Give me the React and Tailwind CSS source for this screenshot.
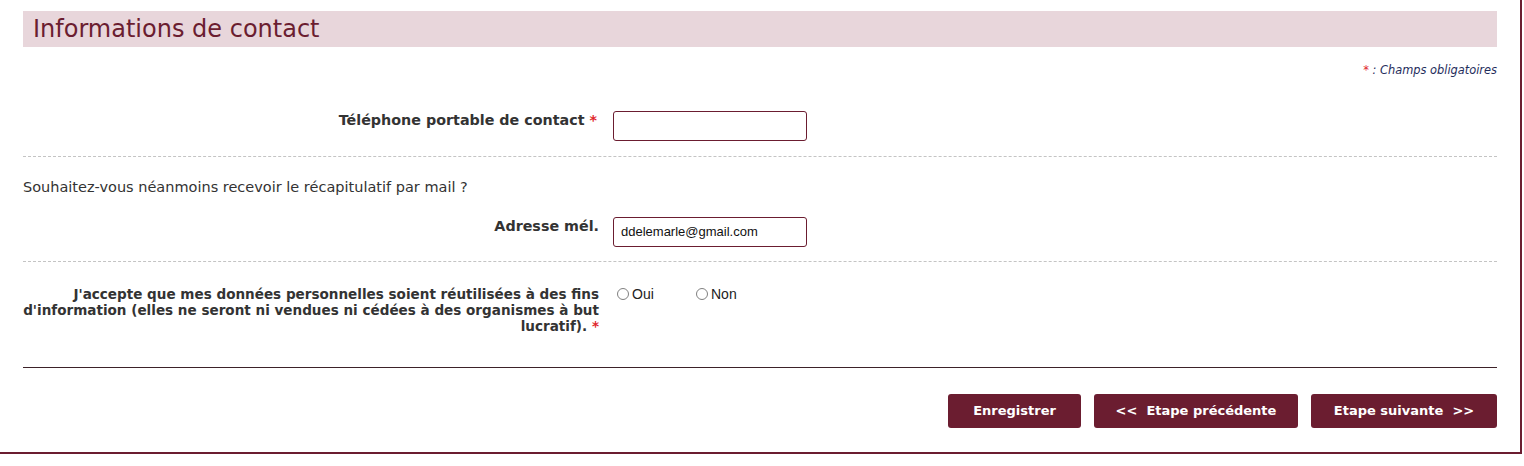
export default function App() {
  const font = { fontFamily: '"DejaVu Sans", Verdana, sans-serif' };
  const arial = { fontFamily: '"Liberation Sans", Arial, sans-serif' };
  return (
    <div className="w-[1522px] h-[454px] border-r-2 border-b-2 border-[#6b1d30] bg-white box-border px-[23px] pt-[11px]" style={font}>
      <div className="h-[36px] bg-[#e8d6db] pl-[10px] flex items-center text-[24px] text-[#6b1d30] leading-none">
        Informations de contact
      </div>
      <div className="mt-[16px] text-right text-[11.4px] italic text-[#1f2d5c] leading-[14px]">
        <span className="text-[#e0262b] not-italic">*</span> : Champs obligatoires
      </div>

      <div className="flex mt-[34px]">
        <div className="w-[590px] pr-[16px] text-right font-bold text-[14.3px] text-[#333] pt-[1px] leading-[17px]">
          Téléphone portable de contact <span className="text-[#e0262b]">*</span>
        </div>
        <div className="w-[194px] h-[30px] border border-[#6b1d30] rounded-[3px]" />
      </div>
      <div className="mt-[15px] border-t border-dashed border-[#c4c4c4]" />

      <div className="mt-[22px] text-[14.5px] text-[#333] leading-[16px]">
        Souhaitez-vous néanmoins recevoir le récapitulatif par mail ?
      </div>
      <div className="flex mt-[22px]">
        <div className="w-[590px] pr-[14px] text-right font-bold text-[14.3px] text-[#333] pt-[1px] leading-[17px]">
          Adresse mél.
        </div>
        <div className="w-[194px] h-[30px] border border-[#6b1d30] rounded-[3px] flex items-center pl-[7px] text-[13px] text-[#111]" style={arial}>
          ddelemarle@gmail.com
        </div>
      </div>
      <div className="mt-[14px] border-t border-dashed border-[#c4c4c4]" />

      <div className="flex items-start mt-[24px]">
        <div className="w-[590px] pr-[14px] text-right font-bold text-[13.55px] text-[#333] leading-[16px] after:content-['_*'] after:text-[#e0262b]">
          J'accepte que mes données personnelles soient réutilisées à des fins d'information (elles ne seront ni vendues ni cédées à des organismes à but lucratif).
        </div>
        <div className="flex items-center text-[14px] text-[#222] leading-[16px] pl-[4px]" style={arial}>
          <span className="flex items-center w-[79px]">
            <span className="w-[12px] h-[12px] rounded-full border border-[#808080] mr-[3px]" />
            Oui
          </span>
          <span className="flex items-center">
            <span className="w-[12px] h-[12px] rounded-full border border-[#808080] mr-[3px]" />
            Non
          </span>
        </div>
      </div>

      <div className="mt-[33px] border-t border-[#3d2229]" />

      <div className="flex justify-end gap-[13px] mt-[26px]">
        <button className="w-[133px] h-[34px] bg-[#6b1d30] text-white font-bold text-[13px] rounded-[3px]" style={font}>Enregistrer</button>
        <button className="w-[204px] h-[34px] bg-[#6b1d30] text-white font-bold text-[13px] rounded-[3px] whitespace-pre" style={font}>{"<<  Etape précédente"}</button>
        <button className="w-[186px] h-[34px] bg-[#6b1d30] text-white font-bold text-[13px] rounded-[3px] whitespace-pre" style={font}>{"Etape suivante  >>"}</button>
      </div>
    </div>
  );
}
